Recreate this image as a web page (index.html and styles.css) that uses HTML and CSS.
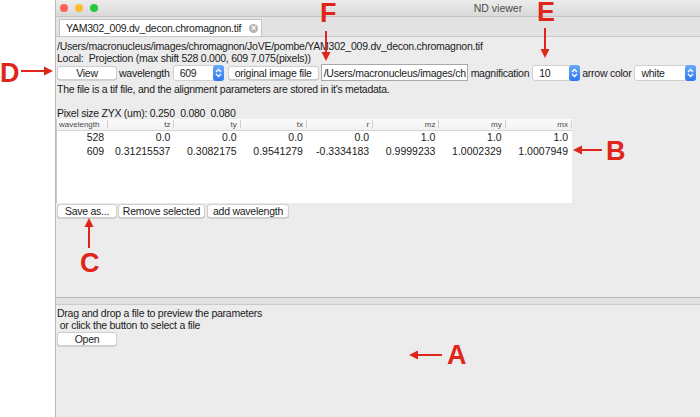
FILE: index.html
```html
<!DOCTYPE html>
<html lang="en">

<head>
    <meta charset="UTF-8">
    <title>ND viewer</title>
    <link rel="stylesheet" href="styles.css">
</head>

<body>
    <div class="screen">
        <div class="gutter"></div>
        <div class="window">
            <div class="titlebar">
                <div class="lights">
                    <span class="light red"></span>
                    <span class="light yellow"></span>
                    <span class="light green"></span>
                </div>
                <div class="title">ND viewer</div>
                <div class="lights-spacer"></div>
            </div>
            <div class="tabbar">
                <div class="tab">YAM302_009.dv_decon.chromagnon.tif <span class="tab-close">&#215;</span></div>
            </div>

            <div class="panel upper">
                <p class="line">/Users/macronucleus/images/chromagnon/JoVE/pombe/YAM302_009.dv_decon.chromagnon.tif</p>
                <p class="line">Local:&nbsp; Projection (max shift 528 0.000, 609 7.075(pixels))</p>
                <div class="controls">
                    <button class="btn btn-view">View</button>
                    <span class="label">wavelength</span>
                    <div class="select sel-wave"><span>609</span><i class="spin"><svg width="7" height="10" viewBox="0 0 7 10"><path d="M1 4 L3.5 1.5 L6 4 M1 6 L3.5 8.5 L6 6" fill="none" stroke="#fff" stroke-width="1.3"/></svg></i></div>
                    <button class="btn btn-orig">original image file</button>
                    <div class="input">/Users/macronucleus/images/ch</div>
                    <span class="label">magnification</span>
                    <div class="select sel-mag"><span>10</span><i class="spin"><svg width="7" height="10" viewBox="0 0 7 10"><path d="M1 4 L3.5 1.5 L6 4 M1 6 L3.5 8.5 L6 6" fill="none" stroke="#fff" stroke-width="1.3"/></svg></i></div>
                    <span class="label">arrow color</span>
                    <div class="select sel-color"><span>white</span><i class="spin"><svg width="7" height="10" viewBox="0 0 7 10"><path d="M1 4 L3.5 1.5 L6 4 M1 6 L3.5 8.5 L6 6" fill="none" stroke="#fff" stroke-width="1.3"/></svg></i></div>
                </div>
                <p class="line">The file is a tif file, and the alignment parameters are stored in it's metadata.</p>
                <p class="line pixel">Pixel size ZYX (um): 0.250&nbsp; 0.080&nbsp; 0.080</p>

                <div class="table-box">
                    <table class="params">
                        <thead>
                            <tr>
                                <th class="col-wave">wavelength</th>
                                <th>tz</th><th>ty</th><th>tx</th><th>r</th>
                                <th>mz</th><th>my</th><th>mx</th>
                            </tr>
                        </thead>
                        <tbody>
                            <tr>
                                <td>528</td><td>0.0</td><td>0.0</td><td>0.0</td><td>0.0</td>
                                <td>1.0</td><td>1.0</td><td>1.0</td>
                            </tr>
                            <tr>
                                <td>609</td><td>0.31215537</td><td>0.3082175</td><td>0.9541279</td><td>-0.3334183</td>
                                <td>0.9999233</td><td>1.0002329</td><td>1.0007949</td>
                            </tr>
                        </tbody>
                    </table>
                </div>

                <div class="actions">
                    <button class="btn btn-save">Save as...</button>
                    <button class="btn btn-remove">Remove selected</button>
                    <button class="btn btn-add">add wavelength</button>
                </div>
            </div>

            <div class="splitter"></div>

            <div class="panel lower">
                <p class="line">Drag and drop a file to preview the parameters</p>
                <p class="line">&nbsp;or click the button to select a file</p>
                <button class="btn btn-open">Open</button>
            </div>
        </div>

        <!-- red annotations over the screenshot -->
        <div class="mark mark-a">A</div>
        <div class="mark mark-b">B</div>
        <div class="mark mark-c">C</div>
        <div class="mark mark-d">D</div>
        <div class="mark mark-e">E</div>
        <div class="mark mark-f">F</div>
        <svg class="arrow arrow-a" width="34" height="10" viewBox="0 0 34 10"><path d="M8 5 H33" stroke="#e0251b" stroke-width="2"/><path d="M0 5 L9 0.5 L9 9.5 Z" fill="#e0251b"/></svg>
        <svg class="arrow arrow-b" width="30" height="10" viewBox="0 0 30 10"><path d="M8 5 H29" stroke="#e0251b" stroke-width="2"/><path d="M0 5 L9 0.5 L9 9.5 Z" fill="#e0251b"/></svg>
        <svg class="arrow arrow-c" width="10" height="30" viewBox="0 0 10 30"><path d="M5 8 V30" stroke="#e0251b" stroke-width="2"/><path d="M5 0 L0.5 9 L9.5 9 Z" fill="#e0251b"/></svg>
        <svg class="arrow arrow-d" width="32" height="10" viewBox="0 0 32 10"><path d="M0 5 H24" stroke="#e0251b" stroke-width="2"/><path d="M32 5 L23 0.5 L23 9.5 Z" fill="#e0251b"/></svg>
        <svg class="arrow arrow-e" width="10" height="30" viewBox="0 0 10 30"><path d="M5 0 V22" stroke="#e0251b" stroke-width="2"/><path d="M5 30 L0.5 21 L9.5 21 Z" fill="#e0251b"/></svg>
        <svg class="arrow arrow-f" width="10" height="30" viewBox="0 0 10 30"><path d="M5 0 V22" stroke="#e0251b" stroke-width="2"/><path d="M5 30 L0.5 21 L9.5 21 Z" fill="#e0251b"/></svg>
    </div>
</body>

</html>
```

FILE: styles.css
```css
* {
    box-sizing: border-box;
}
body {
    margin: 0;
    background: #fff;
    font-family: "Liberation Sans", Arial, sans-serif;
    font-size: 10.5px;
    letter-spacing: -0.25px;
    color: #1b1b1b;
}
.screen {
    position: relative;
    display: flex;
    width: 700px;
    height: 417px;
    overflow: hidden;
}
.gutter {
    flex: 0 0 55px;
    background: #fff;
}
.window {
    flex: 0 0 885px;
    display: flex;
    flex-direction: column;
    background: #ececec;
    border-left: 1px solid #b9b9b9;
}
.titlebar {
    display: flex;
    align-items: center;
    height: 17px;
    background: linear-gradient(#ececec, #d9d9d9);
    border-bottom: 1px solid #c4c4c4;
}
.lights {
    display: flex;
    gap: 7px;
    width: 60px;
    padding-left: 4px;
}
.lights-spacer {
    width: 60px;
}
.light {
    width: 8px;
    height: 8px;
    border-radius: 50%;
}
.red { background: #fc5f57; }
.yellow { background: #fdbc2e; }
.green { background: #28c840; }
.title {
    flex: 1;
    text-align: center;
    color: #4d4d4d;
    font-size: 10.5px;
    letter-spacing: 0;
}
.tabbar {
    height: 20px;
    padding: 2px 0 0 3px;
    background: #e2e2e2;
    border-bottom: 1px solid #c8c8c8;
    display: flex;
}
.tab {
    display: flex;
    align-items: center;
    gap: 8px;
    width: 203px;
    height: 17px;
    padding-left: 6px;
    background: #fff;
    border: 1px solid #c3c3c3;
    border-bottom: none;
    white-space: nowrap;
}
.tab-close {
    display: inline-flex;
    align-items: center;
    justify-content: center;
    width: 9px;
    height: 9px;
    border-radius: 50%;
    background: #b4b4b4;
    color: #fff;
    font-size: 9px;
    line-height: 9px;
    font-weight: bold;
    letter-spacing: 0;
}
.panel {
    padding-left: 1px;
}
.upper {
    height: 260px;
    padding-top: 3px;
}
.line {
    margin: 0;
    height: 12px;
    line-height: 12px;
    white-space: nowrap;
}
.pixel {
    margin-top: 12px;
}
.controls {
    display: flex;
    align-items: center;
    height: 17px;
    margin: 0 0 2px 0;
    white-space: nowrap;
}
.controls > * {
    flex-shrink: 0;
}
.btn {
    flex-shrink: 0;
    height: 14px;
    padding: 0;
    background: #fff;
    border: 1px solid #cfcfcf;
    border-radius: 3px;
    box-shadow: 0 0.5px 0 #b8b8b8;
    font-family: inherit;
    font-size: 10.5px;
    letter-spacing: -0.25px;
    line-height: 12px;
    white-space: nowrap;
    color: #1b1b1b;
}
.btn-view, .btn-save, .btn-open {
    width: 60px;
}
.btn-orig {
    width: 91px;
    margin-left: 4px;
}
.btn-remove {
    width: 87px;
}
.btn-add {
    width: 82px;
}
.label {
    padding: 0 2px;
}
.select {
    display: flex;
    align-items: center;
    justify-content: space-between;
    height: 16px;
    margin-left: 1px;
    padding-left: 6px;
    background: #fff;
    border: 1px solid #d0d0d0;
    border-radius: 3px;
}
.sel-wave { width: 51px; }
.sel-mag { width: 48px; }
.sel-color { width: 62px; }
.spin {
    display: flex;
    align-items: center;
    justify-content: center;
    width: 11px;
    height: 16px;
    margin-right: -1px;
    border-radius: 3px;
    background: linear-gradient(#6aaaf8, #2d79ef);
}
.input {
    width: 147px;
    height: 17px;
    padding-left: 2px;
    margin: 0 1px 0 2px;
    line-height: 16px;
    background: #fff;
    border: 1px solid #a9a9a9;
    overflow: hidden;
    white-space: nowrap;
}
.table-box {
    width: 516px;
    height: 84px;
    margin-left: -1px;
    background: #fff;
    border-left: 1px solid #c9c9c9;
}
.params {
    border-collapse: collapse;
    table-layout: fixed;
    width: 516px;
}
.params th {
    width: 66px;
    height: 11px;
    padding: 0 5px 0 0;
    font-size: 8px;
    font-weight: normal;
    letter-spacing: 0;
    color: #4a4a4a;
    text-align: right;
    border-bottom: 1px solid #d6d6d6;
    background-image: linear-gradient(#cfcfcf, #cfcfcf), linear-gradient(#fbfbfb, #f1f1f1);
    background-size: 1px 8px, 100% 100%;
    background-position: right 1px center, 0 0;
    background-repeat: no-repeat;
}
.params th.col-wave {
    width: 52px;
    text-align: left;
    padding-left: 2px;
}
.params td {
    height: 14px;
    padding: 0 5px 0 0;
    text-align: right;
    white-space: nowrap;
    letter-spacing: 0;
}
.actions {
    display: flex;
    gap: 2px;
    margin-top: 1px;
}
.actions .btn-remove {
    margin-left: -1px;
}
.splitter {
    height: 8px;
    background: #e1e1e1;
    border-top: 1px solid #b9b9b9;
    border-bottom: 1px solid #cacaca;
}
.lower {
    flex: 1;
    padding-top: 2px;
}
.lower .btn-open {
    margin-top: 1px;
}

/* annotations */
.mark {
    position: absolute;
    font-family: "Liberation Sans", Arial, sans-serif;
    font-weight: bold;
    font-size: 27px;
    line-height: 24px;
    letter-spacing: 0;
    color: #e0251b;
}
.mark-a { left: 447px; top: 343px; }
.mark-b { left: 606px; top: 139px; }
.mark-c { left: 80px; top: 251px; }
.mark-d { left: 0; top: 61px; }
.mark-e { left: 537px; top: 0; }
.mark-f { left: 320px; top: 1px; }
.arrow {
    position: absolute;
}
.arrow-a { left: 409px; top: 350px; }
.arrow-b { left: 573px; top: 145px; }
.arrow-c { left: 84px; top: 218px; }
.arrow-d { left: 21px; top: 66px; }
.arrow-e { left: 540px; top: 28px; }
.arrow-f { left: 321px; top: 31px; }
```
